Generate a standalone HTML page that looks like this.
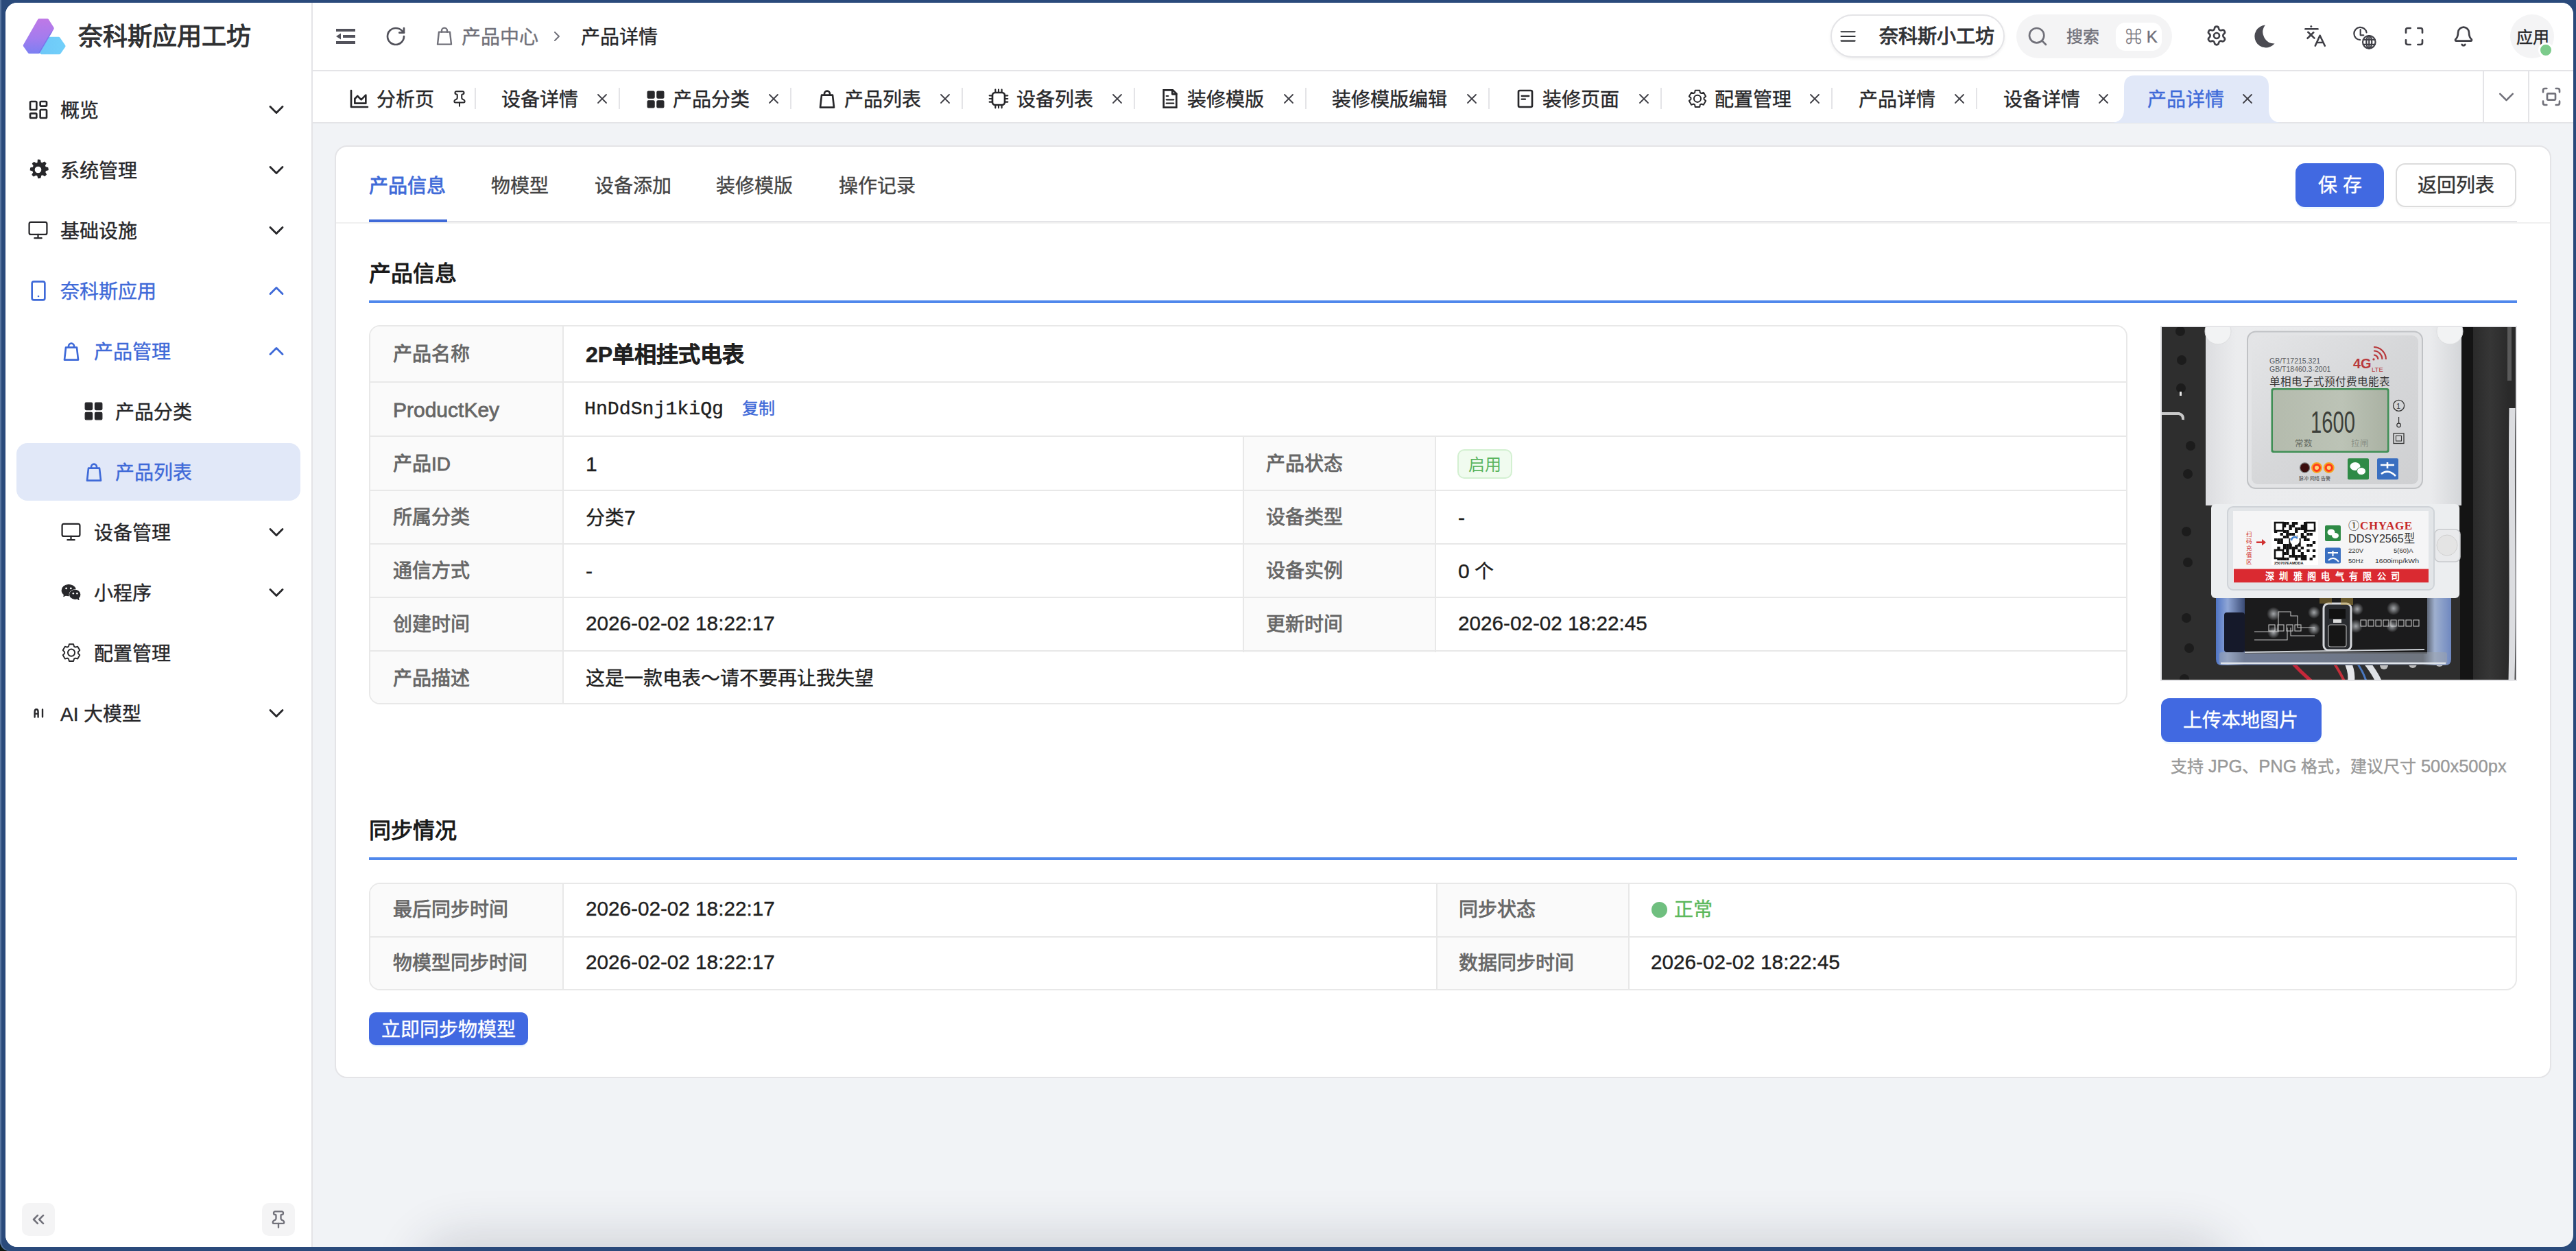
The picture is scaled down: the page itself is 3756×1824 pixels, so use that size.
<!DOCTYPE html>
<html lang="zh-CN"><head><meta charset="utf-8">
<style>
*{margin:0;padding:0;box-sizing:border-box}
html,body{width:3756px;height:1824px;overflow:hidden}
body{background:#2a4a7b;font-family:"Liberation Sans",sans-serif;position:relative;color:#27272a}
.win{position:absolute;left:0;top:0;width:3756px;height:1824px;clip-path:inset(4px 4px 6px 8px round 17px);background:#f1f3f6}
.a{position:absolute}
.t{position:absolute;white-space:nowrap;font-size:28px;line-height:40px;height:40px;margin-top:1px;-webkit-text-stroke-width:0.4px}
.lb{-webkit-text-stroke-width:0.8px}
.nb{-webkit-text-stroke-width:0}
.m{font-family:"Liberation Mono",monospace}
svg.i{position:absolute;stroke:currentColor;stroke-linecap:round;stroke-linejoin:round;overflow:visible}
#sidebar{position:absolute;left:8px;top:4px;width:448px;height:1814px;background:#fff;border-right:2px solid #e4e4e7}
#header{position:absolute;left:456px;top:4px;width:3296px;height:100px;background:#fff;border-bottom:2px solid #e4e4e7}
#tabbar{position:absolute;left:456px;top:104px;width:3296px;height:76px;background:#fff;border-bottom:2px solid #e4e4e7}
#card{position:absolute;left:488px;top:212px;width:3232px;height:1360px;background:#fff;border:2px solid #e4e4e7;border-radius:18px}
.div{position:absolute;width:2px;background:#e4e4e7}
</style></head>
<body>
<div class="a" style="left:0;top:1790px;width:30px;height:34px;background:#0e1912"></div>
<div class="a" style="left:0;top:0;width:3756px;height:1824px;border-bottom-left-radius:14px;background:#2a4a7b;box-shadow:inset 2px 0 0 #56749f"></div>
<div class="win">
<div id="sidebar"></div>
<div id="header"></div>
<div id="tabbar"></div>
<div class="a" style="left:640px;top:1838px;width:2580px;height:60px;border-radius:40px;background:#000;box-shadow:0 -6px 70px 30px rgba(40,45,60,0.16)"></div>
<div id="card"></div>

<svg class="a" style="left:25px;top:20px;width:80px;height:70px" viewBox="25 20 80 70">
<defs><linearGradient id="lg1" x1="0" y1="27" x2="0" y2="79" gradientUnits="userSpaceOnUse"><stop offset="0" stop-color="#bf78e6"/><stop offset="0.55" stop-color="#a37cee"/><stop offset="1" stop-color="#7a80f2"/></linearGradient>
<linearGradient id="lg2" x1="60" y1="0" x2="96" y2="0" gradientUnits="userSpaceOnUse"><stop offset="0" stop-color="#6ec8f8"/><stop offset="1" stop-color="#72d0fa"/></linearGradient></defs>
<path d="M72.5 56H85.5L93.3 67.3L86.5 77H60.5Z" fill="url(#lg2)" stroke="url(#lg2)" stroke-width="4.5" stroke-linejoin="round"/>
<path d="M57 29.5H69L76.5 41.3L56 76H42.8L36 66.4Z" fill="url(#lg1)" stroke="url(#lg1)" stroke-width="4.5" stroke-linejoin="round"/>
<path d="M75.5 46L57 77.5" stroke="#5d70e8" stroke-width="1.5" opacity="0.5"/>
</svg>
<div class="t nb" style="left:114px;top:33px;font-size:36px;color:#303133;font-weight:bold;">奈科斯应用工坊</div>
<div class="a" style="left:24px;top:646px;width:414px;height:84px;border-radius:16px;background:#e1e8f8"></div>
<svg class="i" style="left:39.5px;top:143.5px;width:32px;height:32px;color:#27272a;" viewBox="0 0 24 24" stroke-width="2" fill="none"><rect width="7" height="9" x="3" y="3" rx="1"/><rect width="7" height="5" x="14" y="3" rx="1"/><rect width="7" height="9" x="14" y="12" rx="1"/><rect width="7" height="5" x="3" y="16" rx="1"/></svg>
<div class="t " style="left:88px;top:141.0px;font-size:28px;color:#27272a;">概览</div>
<svg class="i" style="left:384.5px;top:141.5px;width:36px;height:36px;color:#27272a;" viewBox="0 0 24 24" stroke-width="1.9" fill="none"><path d="m6 9 6 6 6-6"/></svg>
<svg class="i" style="left:39.0px;top:231.0px;width:33px;height:33px;color:#27272a" viewBox="0 0 24 24" fill="currentColor" stroke="none"><path d="M12 1.5l2.1.3.6 2.6 1.7.8 2.3-1.4 1.6 1.4-1.3 2.3.7 1.8 2.6.6.3 2.1-2.6.8-.7 1.8 1.3 2.3-1.5 1.5-2.3-1.3-1.8.7-.6 2.6-2.1.3-.8-2.6-1.8-.7-2.3 1.3-1.5-1.5 1.3-2.3-.7-1.8-2.6-.8.3-2.1 2.6-.6.7-1.8-1.3-2.3 1.5-1.4 2.3 1.4 1.8-.8z M12 8a4 4 0 1 0 0 8 4 4 0 0 0 0-8z" fill-rule="evenodd"/></svg>
<div class="t " style="left:88px;top:229.0px;font-size:28px;color:#27272a;">系统管理</div>
<svg class="i" style="left:384.5px;top:229.5px;width:36px;height:36px;color:#27272a;" viewBox="0 0 24 24" stroke-width="1.9" fill="none"><path d="m6 9 6 6 6-6"/></svg>
<svg class="i" style="left:40.0px;top:320.0px;width:31px;height:31px;color:#27272a;" viewBox="0 0 24 24" stroke-width="1.75" fill="none"><rect width="20" height="14" x="2" y="3" rx="2"/><path d="M8 21h8M12 17v4"/></svg>
<div class="t " style="left:88px;top:317.0px;font-size:28px;color:#27272a;">基础设施</div>
<svg class="i" style="left:384.5px;top:317.5px;width:36px;height:36px;color:#27272a;" viewBox="0 0 24 24" stroke-width="1.9" fill="none"><path d="m6 9 6 6 6-6"/></svg>
<svg class="i" style="left:39.5px;top:407.5px;width:32px;height:32px;color:#3f6ad8;" viewBox="0 0 24 24" stroke-width="2" fill="none"><rect x="5" y="2" width="14" height="20" rx="2"/><path d="M12 18h.01"/></svg>
<div class="t " style="left:88px;top:405.0px;font-size:28px;color:#3f6ad8;">奈科斯应用</div>
<svg class="i" style="left:384.5px;top:405.5px;width:36px;height:36px;color:#3f6ad8;" viewBox="0 0 24 24" stroke-width="1.9" fill="none"><path d="m18 15-6-6-6 6"/></svg>
<svg class="i" style="left:87.5px;top:495.5px;width:32px;height:32px;color:#3f6ad8;" viewBox="0 0 24 24" stroke-width="2" fill="none"><path d="M4.5 21.5 6 8h12l1.5 13.5z"/><path d="M9 8V6.5a3 3 0 0 1 6 0V8"/></svg>
<div class="t " style="left:137px;top:493.0px;font-size:28px;color:#3f6ad8;">产品管理</div>
<svg class="i" style="left:384.5px;top:493.5px;width:36px;height:36px;color:#3f6ad8;" viewBox="0 0 24 24" stroke-width="1.9" fill="none"><path d="m18 15-6-6-6 6"/></svg>
<svg class="i" style="left:122.0px;top:585.0px;width:29px;height:29px;color:#27272a" viewBox="0 0 24 24" fill="currentColor" stroke="none"><rect x="1.8" y="1.8" width="8.6" height="8.6" rx="1.2"/><rect x="13.6" y="1.8" width="8.6" height="8.6" rx="1.2"/><rect x="1.8" y="13.6" width="8.6" height="8.6" rx="1.2"/><rect x="13.6" y="13.6" width="8.6" height="8.6" rx="1.2"/></svg>
<div class="t " style="left:168px;top:581.0px;font-size:28px;color:#27272a;">产品分类</div>
<svg class="i" style="left:120.5px;top:671.5px;width:32px;height:32px;color:#3f6ad8;" viewBox="0 0 24 24" stroke-width="2" fill="none"><path d="M4.5 21.5 6 8h12l1.5 13.5z"/><path d="M9 8V6.5a3 3 0 0 1 6 0V8"/></svg>
<div class="t " style="left:168px;top:669.0px;font-size:28px;color:#3f6ad8;">产品列表</div>
<svg class="i" style="left:88.0px;top:760.0px;width:31px;height:31px;color:#27272a;" viewBox="0 0 24 24" stroke-width="1.75" fill="none"><rect width="20" height="14" x="2" y="3" rx="2"/><path d="M8 21h8M12 17v4"/></svg>
<div class="t " style="left:137px;top:757.0px;font-size:28px;color:#27272a;">设备管理</div>
<svg class="i" style="left:384.5px;top:757.5px;width:36px;height:36px;color:#27272a;" viewBox="0 0 24 24" stroke-width="1.9" fill="none"><path d="m6 9 6 6 6-6"/></svg>
<svg class="i" style="left:89.0px;top:849.0px;width:29px;height:29px;color:#27272a" viewBox="0 0 24 24" fill="currentColor" stroke="none"><path d="M9 3C4.6 3 1 6 1 9.7c0 2.1 1.1 4 2.9 5.2L3.2 17l2.6-1.3c1 .3 2.1.5 3.2.5h.3a5.6 5.6 0 0 1-.2-1.6C9.1 11 12.600 8 17 8h.4C16.600 5.100 13.2 3 9 3z"/><path d="M17 9.300c-3.600 0-6.500 2.400-6.500 5.400s2.900 5.400 6.500 5.400c.8 0 1.600-.1 2.300-.4L21.500 21l-.6-2c1.300-1 2.100-2.400 2.100-4.100 0-3-2.900-5.600-6-5.600z"/></svg>
<div class="t " style="left:137px;top:845.0px;font-size:28px;color:#27272a;">小程序</div>
<svg class="i" style="left:384.5px;top:845.5px;width:36px;height:36px;color:#27272a;" viewBox="0 0 24 24" stroke-width="1.9" fill="none"><path d="m6 9 6 6 6-6"/></svg>
<svg class="a" style="left:90px;top:850px;width:30px;height:25px" viewBox="90 850 30 25" fill="#fff"><circle cx="96.6" cy="857.9" r="1.4"/><circle cx="103.3" cy="857.9" r="1.4"/><circle cx="106.8" cy="865.3" r="1.25"/><circle cx="112.4" cy="865.3" r="1.25"/></svg>
<div class="t " style="left:137px;top:933.0px;font-size:28px;color:#27272a;">配置管理</div>
<svg class="i" style="left:84px;top:932px;width:40px;height:40px;color:#27272a" viewBox="84 932 40 40" fill="none" stroke-width="1.9"><path d="M99.97 942.56 L100.90 939.18 L107.10 939.18 L108.03 942.56 L109.82 943.59 L113.21 942.71 L116.30 948.07 L113.85 950.57 L113.85 952.63 L116.30 955.13 L113.21 960.49 L109.82 959.61 L108.03 960.64 L107.10 964.02 L100.90 964.02 L99.97 960.64 L98.18 959.61 L94.79 960.49 L91.70 955.13 L94.15 952.63 L94.15 950.57 L91.70 948.07 L94.79 942.71 L98.18 943.59Z"/><circle cx="104" cy="951.6" r="5.1"/></svg>
<svg class="i" style="left:40px;top:1025px;width:30px;height:30px;color:#27272a" viewBox="40 1025 30 30" fill="none" stroke-width="2.4"><path d="M50.6 1045.5V1038.2Q50.6 1034.3 53.1 1034.3Q55.6 1034.3 55.6 1038.2V1045.5M50.8 1040.6H55.4M62 1034.4V1045.3"/></svg>
<div class="t " style="left:88px;top:1021.0px;font-size:28px;color:#27272a;">AI 大模型</div>
<svg class="i" style="left:384.5px;top:1021.5px;width:36px;height:36px;color:#27272a;" viewBox="0 0 24 24" stroke-width="1.9" fill="none"><path d="m6 9 6 6 6-6"/></svg>
<div class="a" style="left:32px;top:1754px;width:48px;height:48px;border-radius:10px;background:#f4f4f5"></div>
<svg class="i" style="left:42px;top:1764px;width:28px;height:28px;color:#71717a;" viewBox="0 0 24 24" stroke-width="2.2" fill="none"><path d="m11 17-5-5 5-5M18 17l-5-5 5-5"/></svg>
<div class="a" style="left:382px;top:1754px;width:48px;height:48px;border-radius:10px;background:#f4f4f5"></div>
<svg class="i" style="left:392px;top:1764px;width:28px;height:28px;color:#71717a;" viewBox="0 0 24 24" stroke-width="2" fill="none"><path d="M12 17v5"/><path d="M9 10.76a2 2 0 0 1-1.11 1.79l-1.78.9A2 2 0 0 0 5 15.24V16a1 1 0 0 0 1 1h12a1 1 0 0 0 1-1v-.76a2 2 0 0 0-1.11-1.79l-1.78-.9A2 2 0 0 1 15 10.76V7a1 1 0 0 1 1-1 2 2 0 0 0 0-4H8a2 2 0 0 0 0 4 1 1 0 0 1 1 1z"/></svg>
<svg class="a" style="left:490px;top:42px;width:28px;height:22px" viewBox="0 0 28 22" fill="#52525b"><rect x="0" y="0" width="28" height="4"/><rect x="10" y="9" width="18" height="4"/><rect x="0" y="18" width="28" height="4"/><path d="M0 11 L7 6.5 V15.5Z"/></svg>
<svg class="i" style="left:560.5px;top:37px;width:32px;height:32px;color:#52525b;" viewBox="0 0 24 24" stroke-width="2" fill="none"><path d="M21 12a9 9 0 1 1-9-9c2.52 0 4.93 1 6.74 2.74L21 8"/><path d="M21 3v5h-5"/></svg>
<svg class="i" style="left:632px;top:36px;width:32px;height:32px;color:#71717a;" viewBox="0 0 24 24" stroke-width="1.8" fill="none"><path d="M4.5 21.5 6 8h12l1.5 13.5z"/><path d="M9 8V6.5a3 3 0 0 1 6 0V8"/></svg>
<div class="t " style="left:673px;top:34px;font-size:28px;color:#71717a;">产品中心</div>
<svg class="i" style="left:800px;top:41px;width:24px;height:24px;color:#71717a;" viewBox="0 0 24 24" stroke-width="2" fill="none"><path d="m9 18 6-6-6-6"/></svg>
<div class="t " style="left:847px;top:34px;font-size:28px;color:#27272a;">产品详情</div>
<div class="a" style="left:2669px;top:21px;width:254px;height:63px;border-radius:32px;border:2px solid #e4e4e7;background:#fff;box-shadow:0 2px 4px rgba(0,0,0,0.06)"></div>
<svg class="i" style="left:2680px;top:40px;width:30px;height:26px;color:#303236" viewBox="2680 40 30 26" fill="none" stroke-width="2.1" stroke-linecap="butt"><path d="M2684.5 46.3H2704.6M2684.5 53H2704.6M2684.5 59.6H2704.6"/></svg>
<div class="t " style="left:2740px;top:33px;font-size:28px;color:#303236;-webkit-text-stroke-width:1px">奈科斯小工坊</div>
<div class="a" style="left:2940px;top:21px;width:227px;height:64px;border-radius:32px;background:#f4f4f5"></div>
<svg class="i" style="left:2955px;top:37px;width:32px;height:32px;color:#71717a;" viewBox="0 0 24 24" stroke-width="2" fill="none"><circle cx="11" cy="11" r="8"/><path d="m21 21-4.3-4.3"/></svg>
<div class="t " style="left:3013px;top:33px;font-size:24px;color:#71717a;">搜索</div>
<div class="a" style="left:3085px;top:33px;width:67px;height:41px;border-radius:14px;background:#fff"></div>
<div class="t" style="left:3099px;top:33px;font-size:24px;line-height:40px;color:#71717a">&#8984; K</div>
<svg class="i" style="left:3216px;top:36px;width:32px;height:32px;color:#3f3f46;" viewBox="0 0 24 24" stroke-width="2" fill="none"><path d="M9.671 4.136a2.34 2.34 0 0 1 4.659 0 2.34 2.34 0 0 0 3.319 1.915 2.34 2.34 0 0 1 2.33 4.033 2.34 2.34 0 0 0 0 3.831 2.34 2.34 0 0 1-2.33 4.033 2.34 2.34 0 0 0-3.319 1.915 2.34 2.34 0 0 1-4.659 0 2.34 2.34 0 0 0-3.32-1.915 2.34 2.34 0 0 1-2.33-4.033 2.34 2.34 0 0 0 0-3.831A2.34 2.34 0 0 1 6.35 6.051a2.34 2.34 0 0 0 3.319-1.915"/><circle cx="12" cy="12" r="3"/></svg>
<svg class="a" style="left:3280px;top:30px;width:44px;height:44px" viewBox="3280 30 44 44"><path d="M3303 36.5A16.5 16.5 0 1 0 3316.6 63.5A16.7 16.7 0 0 1 3303 36.5Z" fill="#4b4b52"/></svg>
<svg class="i" style="left:3356px;top:32px;width:40px;height:40px;color:#3f3f46" viewBox="3356 32 40 40" fill="none" stroke-width="2.6"><path d="M3361.5 42.2H3379.5"/><circle cx="3369.8" cy="38.6" r="1.5" fill="currentColor" stroke="none"/><path d="M3365.3 46.8L3374.5 55.6M3373.3 47.3L3364.6 55.8"/><path d="M3375.8 66.8L3382.6 51.8L3389.8 66.8M3378 62H3387.6"/></svg>
<svg class="i" style="left:3426px;top:34px;width:44px;height:44px;color:#3f3f46" viewBox="3426 34 44 44" fill="none" stroke-width="2.2"><path d="M3450.6 47.4A9.2 9.2 0 1 0 3441.2 58.2"/><path d="M3441.7 43.2V51.3H3446.3"/><circle cx="3454.3" cy="61.3" r="9.3"/><ellipse cx="3454.3" cy="61.3" rx="4" ry="9.3"/><path d="M3454.3 52V70.6M3445.8 57.8H3462.8M3445.8 64.8H3462.8"/></svg>
<svg class="i" style="left:3504px;top:37px;width:32px;height:32px;color:#3f3f46;" viewBox="0 0 24 24" stroke-width="2" fill="none"><path d="M8 3H5a2 2 0 0 0-2 2v3"/><path d="M21 8V5a2 2 0 0 0-2-2h-3"/><path d="M3 16v3a2 2 0 0 0 2 2h3"/><path d="M16 21h3a2 2 0 0 0 2-2v-3"/></svg>
<svg class="i" style="left:3576px;top:37px;width:32px;height:32px;color:#3f3f46;" viewBox="0 0 24 24" stroke-width="2" fill="none"><path d="M10.268 21a2 2 0 0 0 3.464 0"/><path d="M3.262 15.326A1 1 0 0 0 4 17h16a1 1 0 0 0 .74-1.673C19.41 13.956 18 12.499 18 8A6 6 0 0 0 6 8c0 4.499-1.411 5.956-2.738 7.326"/></svg>
<div class="a" style="left:3660px;top:21px;width:64px;height:64px;border-radius:32px;background:#f4f4f5"></div>
<div class="t " style="left:3669px;top:34px;font-size:24px;color:#27272a;">应用</div>
<div class="a" style="left:3701px;top:62px;width:22px;height:22px;border-radius:11px;background:#7ccb8b;border:3px solid #fff"></div>
<svg class="i" style="left:508px;top:127.80000000000001px;width:32px;height:32px;color:#27272a;" viewBox="0 0 24 24" stroke-width="2" fill="none"><path d="M3 3v18h18"/><path d="M7 12v5h12V8l-5 5-4-4Z"/></svg>
<div class="t " style="left:549px;top:124.80000000000001px;font-size:28px;color:#27272a;">分析页</div>
<svg class="i" style="left:656.5px;top:130.8px;width:26px;height:26px;color:#27272a;" viewBox="0 0 24 24" stroke-width="1.9" fill="none"><path d="M12 17v5"/><path d="M9 10.76a2 2 0 0 1-1.11 1.79l-1.78.9A2 2 0 0 0 5 15.24V16a1 1 0 0 0 1 1h12a1 1 0 0 0 1-1v-.76a2 2 0 0 0-1.11-1.79l-1.78-.9A2 2 0 0 1 15 10.76V7a1 1 0 0 1 1-1 2 2 0 0 0 0-4H8a2 2 0 0 0 0 4 1 1 0 0 1 1 1z"/></svg>
<div class="div" style="left:692px;top:128px;height:31px"></div>
<div class="t " style="left:731px;top:124.80000000000001px;font-size:28px;color:#27272a;">设备详情</div>
<svg class="i" style="left:866px;top:132.3px;width:24px;height:24px;color:#3f3f46;" viewBox="0 0 24 24" stroke-width="1.8" fill="none"><path d="M18 6 6 18M6 6l12 12"/></svg>
<div class="div" style="left:902px;top:128px;height:31px"></div>
<svg class="i" style="left:942px;top:130.8px;width:28px;height:28px;color:#27272a" viewBox="0 0 24 24" fill="currentColor" stroke="none"><rect x="1.8" y="1.8" width="8.6" height="8.6" rx="1.2"/><rect x="13.6" y="1.8" width="8.6" height="8.6" rx="1.2"/><rect x="1.8" y="13.6" width="8.6" height="8.6" rx="1.2"/><rect x="13.6" y="13.6" width="8.6" height="8.6" rx="1.2"/></svg>
<div class="t " style="left:981px;top:124.80000000000001px;font-size:28px;color:#27272a;">产品分类</div>
<svg class="i" style="left:1116px;top:132.3px;width:24px;height:24px;color:#3f3f46;" viewBox="0 0 24 24" stroke-width="1.8" fill="none"><path d="M18 6 6 18M6 6l12 12"/></svg>
<div class="div" style="left:1152px;top:128px;height:31px"></div>
<svg class="i" style="left:1190px;top:127.80000000000001px;width:32px;height:32px;color:#27272a;" viewBox="0 0 24 24" stroke-width="2" fill="none"><path d="M4.5 21.5 6 8h12l1.5 13.5z"/><path d="M9 8V6.5a3 3 0 0 1 6 0V8"/></svg>
<div class="t " style="left:1231px;top:124.80000000000001px;font-size:28px;color:#27272a;">产品列表</div>
<svg class="i" style="left:1366px;top:132.3px;width:24px;height:24px;color:#3f3f46;" viewBox="0 0 24 24" stroke-width="1.8" fill="none"><path d="M18 6 6 18M6 6l12 12"/></svg>
<div class="div" style="left:1402px;top:128px;height:31px"></div>
<svg class="i" style="left:1440px;top:127.80000000000001px;width:32px;height:32px;color:#27272a;" viewBox="0 0 24 24" stroke-width="2" fill="none"><rect width="13.5" height="13.5" x="5.25" y="5.25" rx="3"/><path stroke-width="1.6" d="M8.5 2v3M12 2v3M15.5 2v3M8.5 19v3M12 19v3M15.5 19v3M2 8.5h3M2 12h3M2 15.5h3M19 8.5h3M19 12h3M19 15.5h3"/></svg>
<div class="t " style="left:1482px;top:124.80000000000001px;font-size:28px;color:#27272a;">设备列表</div>
<svg class="i" style="left:1617px;top:132.3px;width:24px;height:24px;color:#3f3f46;" viewBox="0 0 24 24" stroke-width="1.8" fill="none"><path d="M18 6 6 18M6 6l12 12"/></svg>
<div class="div" style="left:1653px;top:128px;height:31px"></div>
<svg class="i" style="left:1690px;top:127.80000000000001px;width:32px;height:32px;color:#27272a;" viewBox="0 0 24 24" stroke-width="2" fill="none"><path stroke-linejoin="miter" d="M15 2.5H5V21.5H19V6.5Z"/><path d="M14.5 2.5V7H19"/><path stroke-width="1.6" d="M10 9H8M16 13H8M16 17H8"/></svg>
<div class="t " style="left:1731px;top:124.80000000000001px;font-size:28px;color:#27272a;">装修模版</div>
<svg class="i" style="left:1867px;top:132.3px;width:24px;height:24px;color:#3f3f46;" viewBox="0 0 24 24" stroke-width="1.8" fill="none"><path d="M18 6 6 18M6 6l12 12"/></svg>
<div class="div" style="left:1903px;top:128px;height:31px"></div>
<div class="t " style="left:1942px;top:124.80000000000001px;font-size:28px;color:#27272a;">装修模版编辑</div>
<svg class="i" style="left:2134px;top:132.3px;width:24px;height:24px;color:#3f3f46;" viewBox="0 0 24 24" stroke-width="1.8" fill="none"><path d="M18 6 6 18M6 6l12 12"/></svg>
<div class="div" style="left:2170px;top:128px;height:31px"></div>
<svg class="i" style="left:2208px;top:127.80000000000001px;width:32px;height:32px;color:#27272a;" viewBox="0 0 24 24" stroke-width="2" fill="none"><rect x="4.5" y="3" width="15" height="18" rx="1.5"/><path stroke-width="1.7" d="M8 9h8M8 12.5h4"/></svg>
<div class="t " style="left:2249px;top:124.80000000000001px;font-size:28px;color:#27272a;">装修页面</div>
<svg class="i" style="left:2385px;top:132.3px;width:24px;height:24px;color:#3f3f46;" viewBox="0 0 24 24" stroke-width="1.8" fill="none"><path d="M18 6 6 18M6 6l12 12"/></svg>
<div class="div" style="left:2421px;top:128px;height:31px"></div>
<div class="t " style="left:2500px;top:124.80000000000001px;font-size:28px;color:#27272a;">配置管理</div>
<svg class="i" style="left:2634px;top:132.3px;width:24px;height:24px;color:#3f3f46;" viewBox="0 0 24 24" stroke-width="1.8" fill="none"><path d="M18 6 6 18M6 6l12 12"/></svg>
<svg class="i" style="left:2455px;top:124px;width:40px;height:40px;color:#27272a" viewBox="2455 124 40 40" fill="none" stroke-width="2"><path d="M2471.10 135.03 L2471.74 131.63 L2478.26 131.63 L2478.90 135.03 L2480.64 136.03 L2483.91 134.89 L2487.17 140.54 L2484.55 142.80 L2484.55 144.80 L2487.17 147.06 L2483.91 152.71 L2480.64 151.57 L2478.90 152.57 L2478.26 155.97 L2471.74 155.97 L2471.10 152.57 L2469.36 151.57 L2466.09 152.71 L2462.83 147.06 L2465.45 144.80 L2465.45 142.80 L2462.83 140.54 L2466.09 134.89 L2469.36 136.03Z"/><circle cx="2475" cy="143.8" r="5.1"/></svg>
<div class="div" style="left:2670px;top:128px;height:31px"></div>
<div class="t " style="left:2710px;top:124.80000000000001px;font-size:28px;color:#27272a;">产品详情</div>
<svg class="i" style="left:2845px;top:132.3px;width:24px;height:24px;color:#3f3f46;" viewBox="0 0 24 24" stroke-width="1.8" fill="none"><path d="M18 6 6 18M6 6l12 12"/></svg>
<div class="div" style="left:2881px;top:128px;height:31px"></div>
<div class="t " style="left:2921px;top:124.80000000000001px;font-size:28px;color:#27272a;">设备详情</div>
<svg class="i" style="left:3055px;top:132.3px;width:24px;height:24px;color:#3f3f46;" viewBox="0 0 24 24" stroke-width="1.8" fill="none"><path d="M18 6 6 18M6 6l12 12"/></svg>
<svg class="a" style="left:3077px;top:110px;width:251px;height:69px" viewBox="0 0 251 69"><path d="M0 69 Q20 69 20 49 V16 Q20 0 36 0 H215 Q231 0 231 16 V49 Q231 69 251 69Z" fill="#e1e8f8"/></svg>
<div class="t " style="left:3131px;top:124.80000000000001px;font-size:28px;color:#3f6ad8;">产品详情</div>
<svg class="i" style="left:3265px;top:132.3px;width:24px;height:24px;color:#3f3f46;" viewBox="0 0 24 24" stroke-width="1.8" fill="none"><path d="M18 6 6 18M6 6l12 12"/></svg>
<div class="div" style="left:3620px;top:104px;height:74px"></div>
<div class="div" style="left:3686px;top:104px;height:74px"></div>
<svg class="i" style="left:3635.5px;top:122.5px;width:37px;height:37px;color:#71717a;" viewBox="0 0 24 24" stroke-width="1.7" fill="none"><path d="m6 9 6 6 6-6"/></svg>
<svg class="i" style="left:3704px;top:125px;width:32px;height:32px;color:#71717a;" viewBox="0 0 24 24" stroke-width="2" fill="none"><path d="M3 7V5a2 2 0 0 1 2-2h2M17 3h2a2 2 0 0 1 2 2v2M21 17v2a2 2 0 0 1-2 2h-2M7 21H5a2 2 0 0 1-2-2v-2"/><rect x="7.5" y="8.5" width="9" height="7" rx="1"/></svg>
<div class="t lb" style="left:538px;top:251px;font-size:28px;color:#3f6ad8;">产品信息</div>
<div class="t " style="left:716px;top:251px;font-size:28px;color:#444;">物模型</div>
<div class="t " style="left:867px;top:251px;font-size:28px;color:#444;">设备添加</div>
<div class="t " style="left:1044px;top:251px;font-size:28px;color:#444;">装修模版</div>
<div class="t " style="left:1223px;top:251px;font-size:28px;color:#444;">操作记录</div>
<div class="a" style="left:490px;top:324px;width:3228px;height:2px;background:#f0f0f0"></div>
<div class="a" style="left:538px;top:322px;width:3132px;height:2px;background:#e4e4e7"></div>
<div class="a" style="left:538px;top:320px;width:114px;height:4px;background:#3f6ad8"></div>
<div class="a" style="left:3347px;top:238px;width:129px;height:64px;border-radius:14px;background:#4169e1;box-shadow:0 3px 0 rgba(5,145,255,0.06)"></div>
<div class="t " style="left:3380px;top:250px;font-size:28px;color:#fff;">保 存</div>
<div class="a" style="left:3493px;top:238px;width:176px;height:64px;border-radius:14px;border:2px solid #dcdcdc;background:#fff;box-shadow:0 3px 0 rgba(0,0,0,0.02)"></div>
<div class="t " style="left:3525px;top:250px;font-size:28px;color:#333;">返回列表</div>
<div class="t nb" style="left:538px;top:378px;font-size:32px;color:#1a1a1a;font-weight:bold;">产品信息</div>
<div class="a" style="left:538px;top:438px;width:3132px;height:4px;background:#5088ec"></div>
<div class="a" style="left:538px;top:474px;width:2564px;height:553px;border:2px solid #e8e8e8;border-radius:16px;overflow:hidden;background:#fff">
<div class="a" style="left:0;top:0;width:282px;height:553px;background:#fafafa;border-right:2px solid #e8e8e8"></div>
<div class="a" style="left:1272px;top:160px;width:282px;height:315px;background:#fafafa;border-left:2px solid #e8e8e8;border-right:2px solid #e8e8e8"></div>
<div class="a" style="left:0;top:80px;width:2564px;height:2px;background:#e8e8e8"></div>
<div class="a" style="left:0;top:159px;width:2564px;height:2px;background:#e8e8e8"></div>
<div class="a" style="left:0;top:238px;width:2564px;height:2px;background:#e8e8e8"></div>
<div class="a" style="left:0;top:316px;width:2564px;height:2px;background:#e8e8e8"></div>
<div class="a" style="left:0;top:394px;width:2564px;height:2px;background:#e8e8e8"></div>
<div class="a" style="left:0;top:472px;width:2564px;height:2px;background:#e8e8e8"></div>
</div>
<div class="t lb" style="left:573px;top:496.0px;font-size:28px;color:#666666;">产品名称</div>
<div class="t lb" style="left:854px;top:496.0px;font-size:32px;color:#1f1f1f;font-weight:bold;-webkit-text-stroke-width:0.6px">2P单相挂式电表</div>
<div class="t lb" style="left:573px;top:576.5px;font-size:28px;color:#666666;"><span style="font-size:30px">ProductKey</span></div>
<div class="t m" style="left:852px;top:575.5px;font-size:28.2px;color:#1f1f1f">HnDdSnj1kiQg</div>
<div class="t " style="left:1082px;top:575.0px;font-size:24px;color:#3f6ad8;">复制</div>
<div class="t lb" style="left:573px;top:655.5px;font-size:28px;color:#666666;">产品ID</div>
<div class="t " style="left:854px;top:655.5px;font-size:28px;color:#1f1f1f;"><span style="font-size:30px">1</span></div>
<div class="t lb" style="left:1846px;top:655.5px;font-size:28px;color:#666666;">产品状态</div>
<div class="t lb" style="left:573px;top:734.0px;font-size:28px;color:#666666;">所属分类</div>
<div class="t " style="left:854px;top:734.0px;font-size:28px;color:#1f1f1f;">分类<span style="font-size:30px">7</span></div>
<div class="t lb" style="left:1846px;top:734.0px;font-size:28px;color:#666666;">设备类型</div>
<div class="t " style="left:2126px;top:734.0px;font-size:28px;color:#1f1f1f;"><span style="font-size:30px">-</span></div>
<div class="t lb" style="left:573px;top:812.0px;font-size:28px;color:#666666;">通信方式</div>
<div class="t " style="left:854px;top:812.0px;font-size:28px;color:#1f1f1f;"><span style="font-size:30px">-</span></div>
<div class="t lb" style="left:1846px;top:812.0px;font-size:28px;color:#666666;">设备实例</div>
<div class="t " style="left:2126px;top:812.0px;font-size:28px;color:#1f1f1f;"><span style="font-size:30px">0</span> 个</div>
<div class="t lb" style="left:573px;top:890.0px;font-size:28px;color:#666666;">创建时间</div>
<div class="t " style="left:854px;top:890.0px;font-size:28px;color:#1f1f1f;"><span style="font-size:29.7px;position:relative;top:-2px">2026-02-02 18:22:17</span></div>
<div class="t lb" style="left:1846px;top:890.0px;font-size:28px;color:#666666;">更新时间</div>
<div class="t " style="left:2126px;top:890.0px;font-size:28px;color:#1f1f1f;"><span style="font-size:29.7px;position:relative;top:-2px">2026-02-02 18:22:45</span></div>
<div class="a" style="left:2125px;top:654.5px;width:80px;height:43px;border-radius:10px;background:#f0fbef;border:2px solid #d3f0d1"></div>
<div class="t nb" style="left:2141px;top:656.5px;font-size:24px;color:#5ab55e;">启用</div>
<div class="t lb" style="left:573px;top:968.5px;font-size:28px;color:#666666;">产品描述</div>
<div class="t " style="left:854px;top:968.5px;font-size:28px;color:#1f1f1f;">这是一款电表～请不要再让我失望</div>
<div class="a" id="photo" style="left:3150px;top:475px;width:520px;height:518px;border:2px solid #e4e4e7;background:#2b2b2b;overflow:hidden"><svg width="516" height="514" viewBox="2 2 516 514" style="position:absolute;left:0;top:0;display:block">
<defs>
<linearGradient id="body" x1="0" y1="0" x2="1" y2="0"><stop offset="0" stop-color="#dcdde0"/><stop offset="0.12" stop-color="#ebecee"/><stop offset="0.88" stop-color="#eaebed"/><stop offset="1" stop-color="#d4d6d9"/></linearGradient>
<linearGradient id="lcdf" x1="0" y1="0" x2="1" y2="1"><stop offset="0" stop-color="#e4e5e7"/><stop offset="0.5" stop-color="#d6d7d9"/><stop offset="1" stop-color="#cfd0d2"/></linearGradient>
<linearGradient id="lcd" x1="0" y1="0" x2="1" y2="0"><stop offset="0" stop-color="#b4bbad"/><stop offset="0.6" stop-color="#bcc3b6"/><stop offset="1" stop-color="#aab2a3"/></linearGradient>
<linearGradient id="post" x1="0" y1="0" x2="1" y2="0"><stop offset="0" stop-color="#2a2a2a"/><stop offset="0.5" stop-color="#363636"/><stop offset="1" stop-color="#2b2b2b"/></linearGradient>
<linearGradient id="cov" x1="0" y1="0" x2="1" y2="0"><stop offset="0" stop-color="#4f74c4"/><stop offset="0.05" stop-color="#8fa6d6"/><stop offset="0.12" stop-color="#3d4e78"/><stop offset="0.88" stop-color="#3a3e46"/><stop offset="0.93" stop-color="#9fb0cf"/><stop offset="1" stop-color="#6f88c0"/></linearGradient>
<radialGradient id="blot"><stop offset="0" stop-color="#d0d4d8" stop-opacity="0.75"/><stop offset="1" stop-color="#d0d4d8" stop-opacity="0"/></radialGradient>
</defs>
<rect x="0" y="0" width="520" height="518" fill="#2e2e2e"/>
<circle cx="29" cy="8" r="7" fill="#1c1c1c"/>
<circle cx="31" cy="50" r="7" fill="#1c1c1c"/>
<circle cx="30" cy="91" r="7" fill="#1c1c1c"/>
<circle cx="44" cy="175" r="7" fill="#1c1c1c"/>
<circle cx="40" cy="216" r="7" fill="#1c1c1c"/>
<circle cx="38" cy="300" r="7" fill="#1c1c1c"/>
<circle cx="40" cy="345" r="7" fill="#1c1c1c"/>
<circle cx="38" cy="426" r="7" fill="#1c1c1c"/>
<circle cx="42" cy="470" r="7" fill="#1c1c1c"/>
<circle cx="35" cy="515" r="7" fill="#1c1c1c"/>
<path d="M28 96 h3 v6 h-3z" fill="#e6e6e6"/>
<path d="M2 128 H27 Q34 130 33 137" stroke="#c9c9c9" stroke-width="4" fill="none"/>
<rect x="437" y="0" width="19" height="518" fill="#141414"/>
<rect x="456" y="0" width="50" height="518" fill="url(#post)"/>
<rect x="506" y="0" width="14" height="518" fill="#2a2a2a"/>
<path d="M513 120 C511 250 515 380 512 518" stroke="#dcdde0" stroke-width="9" fill="none"/>
<rect x="506" y="0" width="6" height="80" fill="#5a5a5a"/>
<circle cx="326" cy="495" r="6" fill="#bdbdbd"/>
<circle cx="368" cy="493" r="6" fill="#bdbdbd"/>
<circle cx="407" cy="491" r="6" fill="#bdbdbd"/>
<path d="M193 492 Q205 505 220 518" stroke="#c4283a" stroke-width="5" fill="none"/>
<path d="M252 490 Q262 505 268 518" stroke="#c42f3a" stroke-width="4" fill="none"/>
<path d="M272 488 Q280 505 278 518" stroke="#e6e7ea" stroke-width="10" fill="none"/>
<path d="M300 490 Q312 505 318 518" stroke="#dfe2e6" stroke-width="9" fill="none"/>
<path d="M287 492 Q296 505 300 518" stroke="#4a78c0" stroke-width="3" fill="none"/>
<path d="M81 397 H424 V486 Q424 495 415 495 H90 Q81 495 81 486Z" fill="url(#cov)"/>
<rect x="123" y="393" width="266" height="85" fill="#1b1b1c"/>
<rect x="93" y="418" width="30" height="58" rx="4" fill="#15192a"/>
<rect x="86" y="476" width="332" height="18" rx="3" fill="#9aa2ad" opacity="0.55"/><path d="M88 492 H416" stroke="#dfe4ea" stroke-width="2.5"/><path d="M123 476 L385 472" stroke="#cfd3d8" stroke-width="2"/>
<circle cx="165" cy="420" r="10" fill="url(#blot)"/>
<circle cx="165" cy="447" r="9" fill="url(#blot)"/>
<circle cx="224" cy="418" r="9" fill="url(#blot)"/>
<circle cx="224" cy="442" r="9" fill="url(#blot)"/>
<circle cx="287" cy="413" r="9" fill="url(#blot)"/>
<circle cx="285" cy="438" r="10" fill="url(#blot)"/>
<circle cx="340" cy="412" r="10" fill="url(#blot)"/>
<circle cx="338" cy="438" r="9" fill="url(#blot)"/>
<g stroke="#dedede" stroke-width="1.1" fill="none" opacity="0.85"><path d="M137 446 H172 V417 H190 V423 H200 V440 H225"/><path d="M137 458 H185 V440"/><path d="M190 440 V452 H225"/><rect x="158" y="436" width="9" height="9"/><rect x="171" y="436" width="9" height="9"/><rect x="184" y="436" width="9" height="9"/><rect x="196" y="436" width="9" height="9"/><rect x="292" y="429" width="8" height="9"/><rect x="303" y="429" width="8" height="9"/><rect x="314" y="429" width="8" height="9"/><rect x="325" y="429" width="8" height="9"/><rect x="336" y="429" width="8" height="9"/><rect x="347" y="429" width="8" height="9"/><rect x="358" y="429" width="8" height="9"/><rect x="369" y="429" width="8" height="9"/></g>
<rect x="238" y="405" width="40" height="68" rx="7" fill="#2a2c30" stroke="#d6d8dc" stroke-width="3"/>
<rect x="246" y="413" width="24" height="14" fill="#111"/><rect x="252" y="428" width="12" height="5" fill="#dcdcdc"/><rect x="245" y="436" width="26" height="32" rx="3" fill="#151515" stroke="#aaa" stroke-width="1.2"/>
<rect x="263" y="393" width="18" height="14" fill="#b89a40" opacity="0.5"/><rect x="232" y="393" width="18" height="12" fill="#b0903a" opacity="0.45"/>
<rect x="66" y="0" width="373" height="262" fill="url(#body)"/>
<circle cx="84" cy="8" r="19" fill="#f2f3f4" stroke="#dcdddf" stroke-width="1"/><circle cx="422" cy="8" r="19" fill="#f2f3f4" stroke="#dcdddf" stroke-width="1"/>
<rect x="127" y="8.5" width="255" height="228.5" rx="12" fill="#e3e4e6" stroke="#c0c2c5" stroke-width="2"/>
<rect x="133" y="14" width="243" height="217" rx="9" fill="url(#lcdf)"/>
<g fill="#55585c" font-family="Liberation Sans" font-size="10.5"><text x="159" y="54.5">GB/T17215.321</text><text x="159" y="66.5">GB/T18460.3-2001</text></g>
<text x="159" y="86.5" font-size="15.6" fill="#333" font-family="Liberation Sans,sans-serif">单相电子式预付费电能表</text>
<text x="281" y="61.5" font-size="20" font-weight="bold" fill="#b8393c" font-family="Liberation Sans">4G</text><text x="308" y="66.5" font-size="9.5" fill="#b8393c" font-family="Liberation Sans">LTE</text>
<g stroke="#b8393c" stroke-width="2.2" fill="none"><path d="M311 42.5 a6.4 6.4 0 0 1 6.4 6.4"/><path d="M311 36.5 a12.4 12.4 0 0 1 12.4 12.4"/><path d="M311 31 a17.9 17.9 0 0 1 17.9 17.9"/></g><circle cx="311" cy="48.9" r="1.6" fill="#b8393c"/>
<rect x="161.5" y="91" width="172" height="94" rx="3" fill="#3f8f55"/>
<rect x="164" y="93.5" width="167" height="89" rx="2" fill="url(#lcd)"/>
<text x="219" y="156" font-size="44" fill="#3c3f3a" font-family="Liberation Sans" textLength="65" lengthAdjust="spacingAndGlyphs">1600</text>
<text x="196" y="176" font-size="12.5" fill="#666b62" font-family="Liberation Sans,sans-serif">常数</text><text x="278" y="176" font-size="12.5" fill="#8a9086" font-family="Liberation Sans,sans-serif">拉闸</text>
<circle cx="347.6" cy="116.4" r="8" fill="none" stroke="#333" stroke-width="1.3"/><text x="344" y="121" font-size="11" fill="#333" font-family="Liberation Sans">1</text><path d="M347.6 133 V142" stroke="#333" stroke-width="1.2"/><circle cx="347.6" cy="145" r="2.8" fill="none" stroke="#333" stroke-width="1.2"/><rect x="340" y="157" width="15" height="14.5" fill="none" stroke="#333" stroke-width="1.3"/><rect x="343.5" y="160.5" width="8" height="7.5" fill="none" stroke="#333" stroke-width="1.1"/>
<circle cx="210.6" cy="206.9" r="7" fill="#3a0d0d" stroke="#6d6d6d" stroke-width="1.2"/><circle cx="228" cy="206.9" r="7" fill="#ff3b1c" stroke="#f5a623" stroke-width="2"/><circle cx="245.7" cy="206.9" r="7" fill="#ff3b1c" stroke="#f5a623" stroke-width="2"/>
<circle cx="228" cy="206.9" r="3" fill="#ffd27a"/><circle cx="245.7" cy="206.9" r="3" fill="#ffd27a"/>
<text x="202" y="225" font-size="7" fill="#444" font-family="Liberation Sans,sans-serif">脉冲 网络 告警</text>
<rect x="273" y="193.3" width="31" height="31" rx="2" fill="#2e8a46"/><rect x="316" y="193.3" width="31" height="31" rx="2" fill="#3a6fc0"/>
<ellipse cx="284" cy="205" rx="7.5" ry="6" fill="#fff"/><ellipse cx="293" cy="212" rx="6.5" ry="5.5" fill="#fff" stroke="#2e8a46" stroke-width="1"/>
<path d="M321 203 H341 M331 199 V208 M322 216 Q332 208 343 219" stroke="#fff" stroke-width="2.6" fill="none"/>
<rect x="74" y="260" width="362" height="137" rx="6" fill="#eceef0"/>
<rect x="98" y="264" width="301" height="121" rx="8" fill="#e2e5e8" stroke="#cfd3d8" stroke-width="2"/>
<rect x="106" y="270" width="285" height="104" fill="#f5f5f6"/>
<rect x="400" y="297" width="37" height="47" rx="7" fill="#e9eaec" stroke="#c8cacd" stroke-width="1.5"/><circle cx="418" cy="320" r="15" fill="#e4e4e4" stroke="#d0d0d0" stroke-width="1"/>
<rect x="162" y="283" width="68" height="66" fill="#fff"/>
<g fill="#111"><rect x="166.0" y="286.0" width="4.3" height="4"/><rect x="166.0" y="298.0" width="4.3" height="4"/><rect x="166.0" y="310.0" width="4.3" height="4"/><rect x="166.0" y="326.0" width="4.3" height="4"/><rect x="166.0" y="330.0" width="4.3" height="4"/><rect x="166.0" y="334.0" width="4.3" height="4"/><rect x="170.3" y="290.0" width="4.3" height="4"/><rect x="170.3" y="310.0" width="4.3" height="4"/><rect x="170.3" y="314.0" width="4.3" height="4"/><rect x="170.3" y="322.0" width="4.3" height="4"/><rect x="170.3" y="326.0" width="4.3" height="4"/><rect x="170.3" y="330.0" width="4.3" height="4"/><rect x="170.3" y="334.0" width="4.3" height="4"/><rect x="170.3" y="338.0" width="4.3" height="4"/><rect x="174.6" y="286.0" width="4.3" height="4"/><rect x="174.6" y="302.0" width="4.3" height="4"/><rect x="174.6" y="310.0" width="4.3" height="4"/><rect x="174.6" y="314.0" width="4.3" height="4"/><rect x="174.6" y="334.0" width="4.3" height="4"/><rect x="174.6" y="338.0" width="4.3" height="4"/><rect x="178.9" y="286.0" width="4.3" height="4"/><rect x="178.9" y="290.0" width="4.3" height="4"/><rect x="178.9" y="298.0" width="4.3" height="4"/><rect x="178.9" y="306.0" width="4.3" height="4"/><rect x="178.9" y="318.0" width="4.3" height="4"/><rect x="178.9" y="322.0" width="4.3" height="4"/><rect x="178.9" y="330.0" width="4.3" height="4"/><rect x="178.9" y="338.0" width="4.3" height="4"/><rect x="183.2" y="286.0" width="4.3" height="4"/><rect x="183.2" y="298.0" width="4.3" height="4"/><rect x="183.2" y="302.0" width="4.3" height="4"/><rect x="183.2" y="306.0" width="4.3" height="4"/><rect x="183.2" y="318.0" width="4.3" height="4"/><rect x="183.2" y="322.0" width="4.3" height="4"/><rect x="183.2" y="326.0" width="4.3" height="4"/><rect x="183.2" y="330.0" width="4.3" height="4"/><rect x="183.2" y="338.0" width="4.3" height="4"/><rect x="187.5" y="290.0" width="4.3" height="4"/><rect x="187.5" y="294.0" width="4.3" height="4"/><rect x="187.5" y="302.0" width="4.3" height="4"/><rect x="187.5" y="310.0" width="4.3" height="4"/><rect x="187.5" y="314.0" width="4.3" height="4"/><rect x="187.5" y="318.0" width="4.3" height="4"/><rect x="187.5" y="322.0" width="4.3" height="4"/><rect x="187.5" y="334.0" width="4.3" height="4"/><rect x="191.8" y="286.0" width="4.3" height="4"/><rect x="191.8" y="290.0" width="4.3" height="4"/><rect x="191.8" y="302.0" width="4.3" height="4"/><rect x="191.8" y="310.0" width="4.3" height="4"/><rect x="191.8" y="314.0" width="4.3" height="4"/><rect x="191.8" y="322.0" width="4.3" height="4"/><rect x="191.8" y="326.0" width="4.3" height="4"/><rect x="191.8" y="330.0" width="4.3" height="4"/><rect x="191.8" y="334.0" width="4.3" height="4"/><rect x="196.1" y="286.0" width="4.3" height="4"/><rect x="196.1" y="294.0" width="4.3" height="4"/><rect x="196.1" y="298.0" width="4.3" height="4"/><rect x="196.1" y="306.0" width="4.3" height="4"/><rect x="196.1" y="318.0" width="4.3" height="4"/><rect x="196.1" y="322.0" width="4.3" height="4"/><rect x="196.1" y="334.0" width="4.3" height="4"/><rect x="196.1" y="338.0" width="4.3" height="4"/><rect x="200.4" y="294.0" width="4.3" height="4"/><rect x="200.4" y="310.0" width="4.3" height="4"/><rect x="200.4" y="314.0" width="4.3" height="4"/><rect x="200.4" y="318.0" width="4.3" height="4"/><rect x="200.4" y="326.0" width="4.3" height="4"/><rect x="200.4" y="334.0" width="4.3" height="4"/><rect x="204.7" y="290.0" width="4.3" height="4"/><rect x="204.7" y="294.0" width="4.3" height="4"/><rect x="204.7" y="302.0" width="4.3" height="4"/><rect x="204.7" y="306.0" width="4.3" height="4"/><rect x="204.7" y="322.0" width="4.3" height="4"/><rect x="204.7" y="330.0" width="4.3" height="4"/><rect x="204.7" y="334.0" width="4.3" height="4"/><rect x="204.7" y="338.0" width="4.3" height="4"/><rect x="209.0" y="286.0" width="4.3" height="4"/><rect x="209.0" y="290.0" width="4.3" height="4"/><rect x="209.0" y="294.0" width="4.3" height="4"/><rect x="209.0" y="298.0" width="4.3" height="4"/><rect x="209.0" y="306.0" width="4.3" height="4"/><rect x="209.0" y="310.0" width="4.3" height="4"/><rect x="209.0" y="334.0" width="4.3" height="4"/><rect x="209.0" y="338.0" width="4.3" height="4"/><rect x="213.3" y="286.0" width="4.3" height="4"/><rect x="213.3" y="302.0" width="4.3" height="4"/><rect x="213.3" y="310.0" width="4.3" height="4"/><rect x="213.3" y="318.0" width="4.3" height="4"/><rect x="213.3" y="326.0" width="4.3" height="4"/><rect x="217.6" y="302.0" width="4.3" height="4"/><rect x="217.6" y="318.0" width="4.3" height="4"/><rect x="217.6" y="338.0" width="4.3" height="4"/><rect x="221.9" y="294.0" width="4.3" height="4"/><rect x="221.9" y="314.0" width="4.3" height="4"/><rect x="221.9" y="326.0" width="4.3" height="4"/><rect x="221.9" y="334.0" width="4.3" height="4"/></g>
<g fill="#fff" stroke="#111" stroke-width="2.6"><rect x="167" y="287" width="12" height="12"/><rect x="213" y="287" width="12" height="12"/><rect x="167" y="327" width="12" height="12"/></g>
<circle cx="196" cy="313" r="7" fill="#fff"/><path d="M191 313 a5 5 0 0 1 9 -3" stroke="#3d7fd0" stroke-width="2.5" fill="none"/>
<text x="166" y="347.5" font-size="5.5" fill="#111" font-weight="bold" font-family="Liberation Sans">250707EAMDDA</text>
<text x="128" y="300" font-size="8.5" fill="#d03030" font-family="Liberation Sans,sans-serif" writing-mode="tb" letter-spacing="1">扫码充值区</text>
<path d="M140 315.7 h9" stroke="#d03030" stroke-width="2.5"/><path d="M148 311 l6 4.7 l-6 4.7z" fill="#d03030"/>
<rect x="240" y="291" width="23" height="23" rx="2" fill="#2e8a46"/><rect x="240" y="323.4" width="23" height="23" rx="2" fill="#3a6fc0"/>
<ellipse cx="249" cy="301" rx="5.5" ry="4.5" fill="#fff"/><ellipse cx="255" cy="306" rx="5" ry="4" fill="#fff"/>
<path d="M244 331 H259 M251.5 328 V336 M245 342 Q252 335 260 344" stroke="#fff" stroke-width="2" fill="none"/>
<text x="274" y="297" font-size="16" fill="#222" font-family="Liberation Sans">①</text><text x="291" y="297" font-size="17" font-weight="bold" fill="#c62828" font-family="Liberation Serif" letter-spacing="0.6">CHYAGE</text>
<text x="274" y="316" font-size="17" fill="#333" font-family="Liberation Sans" textLength="97" lengthAdjust="spacingAndGlyphs">DDSY2565型</text>
<g font-size="9.5" fill="#333" font-family="Liberation Sans"><text x="274" y="331">220V</text><text x="340" y="331">5(60)A</text><text x="274" y="345.5">50Hz</text><text x="313" y="345.5" textLength="64" lengthAdjust="spacingAndGlyphs">1600imp/kWh</text></g>
<rect x="107" y="354.6" width="284" height="19.7" fill="#da2a31"/>
<text x="153" y="369.5" font-size="13.2" fill="#fff" font-weight="bold" font-family="Liberation Sans,sans-serif" textLength="196" lengthAdjust="spacing">深圳雅阁电气有限公司</text>
</svg></div>
<div class="a" style="left:3151px;top:1018px;width:234px;height:64px;border-radius:12px;background:#4169e1;box-shadow:0 3px 0 rgba(5,145,255,0.06)"></div>
<div class="t " style="left:3183px;top:1030px;font-size:28px;color:#fff;">上传本地图片</div>
<div class="t " style="left:3165px;top:1096px;font-size:24px;color:#999;">支持 <span style="font-size:25.5px">JPG</span>、<span style="font-size:25.5px">PNG</span> 格式，建议尺寸 <span style="font-size:25.5px">500x500px</span></div>
<div class="t nb" style="left:538px;top:1190px;font-size:32px;color:#1a1a1a;font-weight:bold;">同步情况</div>
<div class="a" style="left:538px;top:1250px;width:3132px;height:4px;background:#5088ec"></div>
<div class="a" style="left:538px;top:1287px;width:3132px;height:157px;border:2px solid #e8e8e8;border-radius:16px;overflow:hidden;background:#fff">
<div class="a" style="left:0;top:0;width:282px;height:157px;background:#fafafa;border-right:2px solid #e8e8e8"></div>
<div class="a" style="left:1554px;top:0;width:282px;height:157px;background:#fafafa;border-left:2px solid #e8e8e8;border-right:2px solid #e8e8e8"></div>
<div class="a" style="left:0;top:76px;width:3132px;height:2px;background:#e8e8e8"></div>
</div>
<div class="t lb" style="left:573px;top:1306.0px;font-size:28px;color:#666666;">最后同步时间</div>
<div class="t " style="left:854px;top:1304.0px;font-size:28px;color:#1f1f1f;"><span style="font-size:29.7px">2026-02-02 18:22:17</span></div>
<div class="t lb" style="left:2127px;top:1306.0px;font-size:28px;color:#666666;">同步状态</div>
<div class="t lb" style="left:573px;top:1384.0px;font-size:28px;color:#666666;">物模型同步时间</div>
<div class="t " style="left:854px;top:1382.0px;font-size:28px;color:#1f1f1f;"><span style="font-size:29.7px">2026-02-02 18:22:17</span></div>
<div class="t lb" style="left:2127px;top:1384.0px;font-size:28px;color:#666666;">数据同步时间</div>
<div class="a" style="left:2408px;top:1315px;width:23px;height:23px;border-radius:12px;background:#6fbf7f"></div>
<div class="t " style="left:2441px;top:1306.0px;font-size:28px;color:#5cb85c;">正常</div>
<div class="t " style="left:2407px;top:1382.0px;font-size:28px;color:#1f1f1f;"><span style="font-size:29.7px">2026-02-02 18:22:45</span></div>
<div class="a" style="left:538px;top:1476px;width:232px;height:48px;border-radius:10px;background:#4169e1;box-shadow:0 3px 0 rgba(5,145,255,0.06)"></div>
<div class="t " style="left:556px;top:1481px;font-size:28px;color:#fff;">立即同步物模型</div>
</div></body></html>
